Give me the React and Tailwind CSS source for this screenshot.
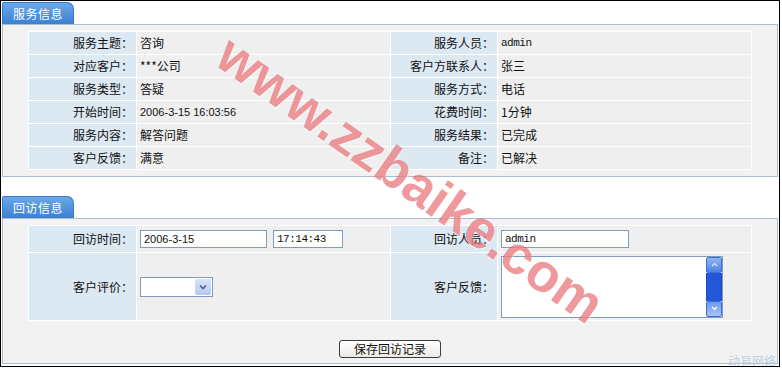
import React from "react";

const rows = [
  ["服务主题：", "咨询", "服务人员：", "admin"],
  ["对应客户：", "***公司", "客户方联系人：", "张三"],
  ["服务类型：", "答疑", "服务方式：", "电话"],
  ["开始时间：", "2006-3-15 16:03:56", "花费时间：", "1分钟"],
  ["服务内容：", "解答问题", "服务结果：", "已完成"],
  ["客户反馈：", "满意", "备注：", "已解决"],
];

const isMono = (s) => /^[a-z]+$/.test(s);
const isNum = (s) => /^[0-9:\- ]+$/.test(s);

function Tab({ title }) {
  return (
    <div className="h-[22px] w-[72px] rounded-tr-[7px] rounded-tl-[2px] bg-gradient-to-b from-[#6aa8ea] to-[#3b80d2] border border-b-0 border-[#3a78c0] flex items-center justify-center text-white text-[12px] leading-none tracking-[0.5px]">
      {title}
    </div>
  );
}

function Label({ children, className = "" }) {
  return (
    <div className={`bg-[#dce8f2] flex items-center justify-end pr-[3px] text-[12px] text-[#111] ${className}`}>
      {children}
    </div>
  );
}

function Value({ children, className = "" }) {
  return (
    <div className={`bg-[#efefef] flex items-center pl-[3px] text-[12px] text-[#111] ${className}`}>
      {children}
    </div>
  );
}

function Text({ s }) {
  if (isMono(s)) {
    return <span className="font-['Liberation_Mono',monospace] text-[11px] tracking-[-0.5px]">{s}</span>;
  }
  if (isNum(s)) {
    return <span className="font-['Liberation_Sans',sans-serif] text-[11px]">{s}</span>;
  }
  return <span>{s}</span>;
}

function Field({ value, w, sans }) {
  const font = sans
    ? "font-['Liberation_Sans',sans-serif]"
    : "font-['Liberation_Mono',monospace] tracking-[-0.5px]";
  return (
    <div className={`${w} h-[18px] border border-[#7f9db9] bg-white flex items-center px-[3px] ${font} text-[11px] text-[#111]`}>
      {value}
    </div>
  );
}

export default function App() {
  return (
    <div className="w-[780px] border border-black p-px pb-[2px] bg-white relative overflow-hidden font-['Noto_Sans_CJK_SC','Noto_Sans',sans-serif]">
      {/* 服务信息 */}
      <Tab title="服务信息" />
      <div className="border border-[#a9bfd1] bg-[#f2f2f2] px-[25px] pt-[6px] pb-[6px]">
        <div className="grid grid-cols-[107px_253px_106px_253px] auto-rows-[22px] gap-px p-px bg-white">
          {rows.map((r) => (
            <React.Fragment key={r[0]}>
              <Label>{r[0]}</Label>
              <Value><Text s={r[1]} /></Value>
              <Label>{r[2]}</Label>
              <Value><Text s={r[3]} /></Value>
            </React.Fragment>
          ))}
        </div>
      </div>

      {/* 回访信息 */}
      <div className="mt-[19px]">
        <Tab title="回访信息" />
      </div>
      <div className="border border-[#a9bfd1] bg-[#f2f2f2] px-[25px] pt-[6px] pb-[5px]">
        <div className="grid grid-cols-[107px_253px_106px_253px] grid-rows-[26px_67px] gap-px p-px bg-white">
          <Label>回访时间：</Label>
          <Value className="gap-[6px] pl-[3px]">
            <Field value="2006-3-15" w="w-[127px]" sans />
            <Field value="17:14:43" w="w-[70px]" />
          </Value>
          <Label>回访人员：</Label>
          <Value>
            <Field value="admin" w="w-[128px]" />
          </Value>

          <Label>客户评价：</Label>
          <Value className="pl-[2px]">
            <div className="w-[73px] h-[20px] border border-[#7f9db9] bg-white flex justify-end p-px">
              <div className="w-[16px] h-full bg-gradient-to-b from-[#d8e4fc] to-[#b4c9f4] rounded-[2px] flex items-center justify-center">
                <svg width="8" height="6" viewBox="0 0 8 6">
                  <path d="M1 1.5 L4 4.5 L7 1.5" fill="none" stroke="#4d6185" strokeWidth="1.6" />
                </svg>
              </div>
            </div>
          </Value>
          <Label>客户反馈：</Label>
          <Value className="pl-[3px]">
            <div className="w-[222px] h-[62px] border border-[#7f9db9] bg-white flex justify-end">
              <div className="w-[16px] h-full flex flex-col">
                <div className="h-[16px] bg-gradient-to-b from-[#8fb4f4] to-[#4f82e6] border border-[#3b6fd6] rounded-[2px] flex items-center justify-center">
                  <svg width="7" height="5" viewBox="0 0 7 5">
                    <path d="M1 4 L3.5 1.5 L6 4" fill="none" stroke="#dfe9fc" strokeWidth="1.2" />
                  </svg>
                </div>
                <div className="flex-1 bg-[#2458d8] border-x border-[#1c48b8]" />
                <div className="h-[16px] bg-gradient-to-b from-[#6d9af0] to-[#a9c3f4] border border-[#3b6fd6] rounded-[2px] flex items-center justify-center">
                  <svg width="7" height="5" viewBox="0 0 7 5">
                    <path d="M1 1 L3.5 3.5 L6 1" fill="none" stroke="#ffffff" strokeWidth="1.2" />
                  </svg>
                </div>
              </div>
            </div>
          </Value>
        </div>

        <div className="flex justify-center mt-[19px]">
          <button className="w-[102px] h-[18px] border border-[#3c3c3c] rounded-[3px] bg-gradient-to-b from-white to-[#ecebe6] text-[12px] text-[#111] leading-none flex items-center justify-center">
            保存回访记录
          </button>
        </div>
      </div>

      {/* watermark overlays */}
      <div className="absolute left-[410px] top-[178px] -translate-x-1/2 -translate-y-1/2 rotate-[35deg] whitespace-nowrap pointer-events-none font-['Liberation_Sans',sans-serif] font-bold text-[54px] leading-none text-[#e0343c]/50 [text-shadow:1px_1px_0_rgba(255,255,255,0.6)]">
        www.zzbaike.com
      </div>
      <div className="absolute right-[3px] bottom-[-1px] text-[12px] leading-none text-[#bcd0e2] pointer-events-none">
        动易网络
      </div>
    </div>
  );
}
